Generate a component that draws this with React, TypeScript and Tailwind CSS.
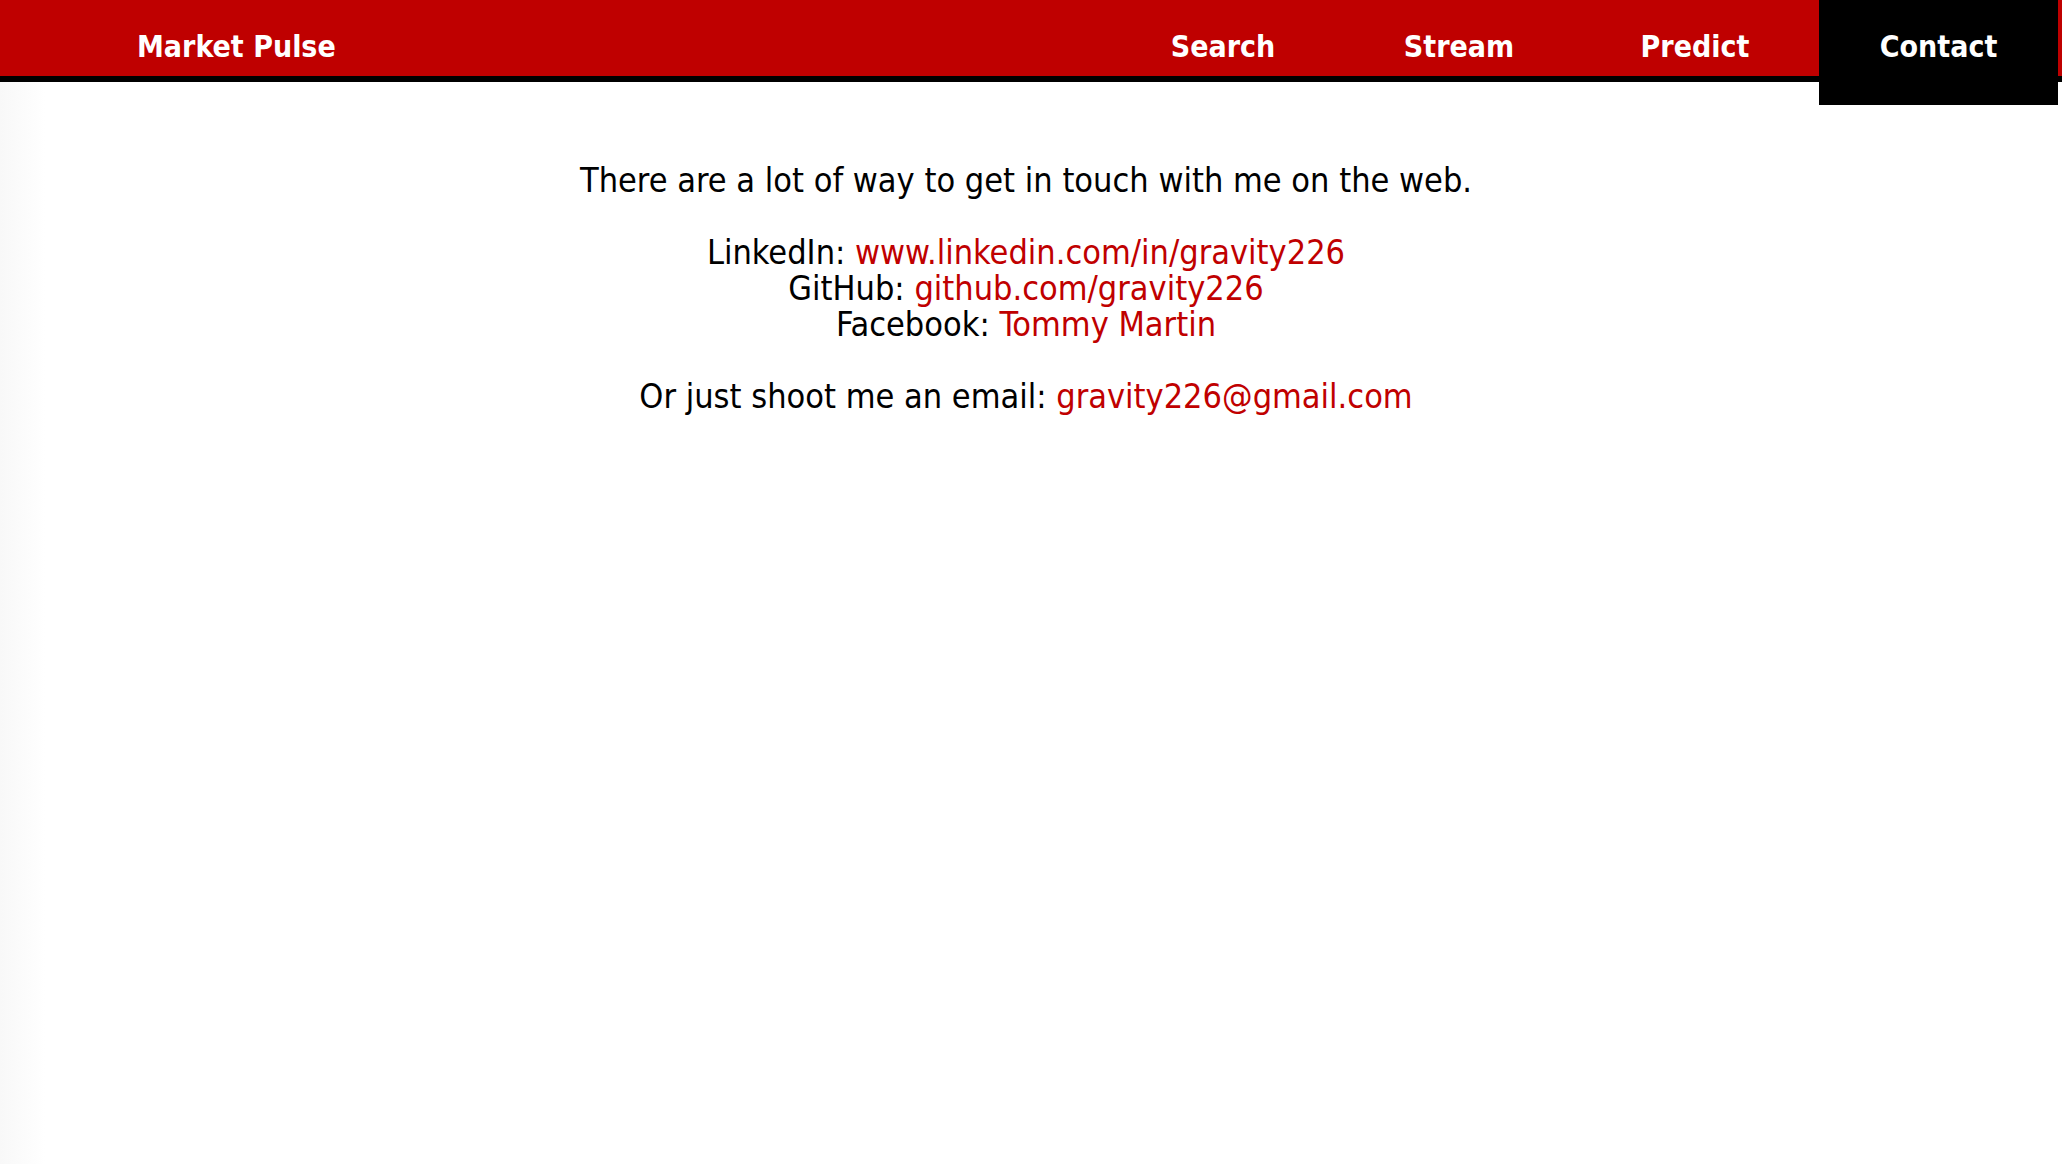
import React from 'react';

const navItems = ['Search', 'Stream', 'Predict', 'Contact'];

function NavBar() {
  return (
    <header className="flex items-start h-[82px] bg-[#bf0000] border-b-[6px] border-black pr-[4px]">
      <div className="pl-[137px] pt-[27px] text-[30px] leading-[40px] font-bold text-white">
        Market Pulse
      </div>
      <nav className="ml-auto flex items-start">
        {navItems.map((item) => {
          const active = item === 'Contact';
          return (
            <a
              key={item}
              href="#"
              className={
                active
                  ? 'relative z-10 ml-[6px] w-[239px] h-[105px] bg-black text-white text-center pt-[27px] text-[30px] leading-[40px] font-bold'
                  : 'w-[236px] h-[76px] text-white text-center pt-[27px] text-[30px] leading-[40px] font-bold'
              }
            >
              {item}
            </a>
          );
        })}
      </nav>
    </header>
  );
}

export default function App() {
  return (
    <div
      className="min-h-[1164px] bg-[linear-gradient(to_right,#f8f8f8,#ffffff_45px)] text-black font-stretch-condensed"
      style={{ fontFamily: '"DejaVu Sans Condensed", "DejaVu Sans", sans-serif' }}
    >
      <NavBar />
      <main className="pt-[80px] text-center text-[34px] leading-[36px] pr-[10px]">
        <p>There are a lot of way to get in touch with me on the web.</p>
        <p className="mt-[36px]">
          LinkedIn: <a href="#" className="text-[#c00000]">www.linkedin.com/in/gravity226</a>
          <br />
          GitHub: <a href="#" className="text-[#c00000]">github.com/gravity226</a>
          <br />
          Facebook: <a href="#" className="text-[#c00000]">Tommy Martin</a>
        </p>
        <p className="mt-[36px]">
          Or just shoot me an email: <a href="#" className="text-[#c00000]">gravity226@gmail.com</a>
        </p>
      </main>
    </div>
  );
}
